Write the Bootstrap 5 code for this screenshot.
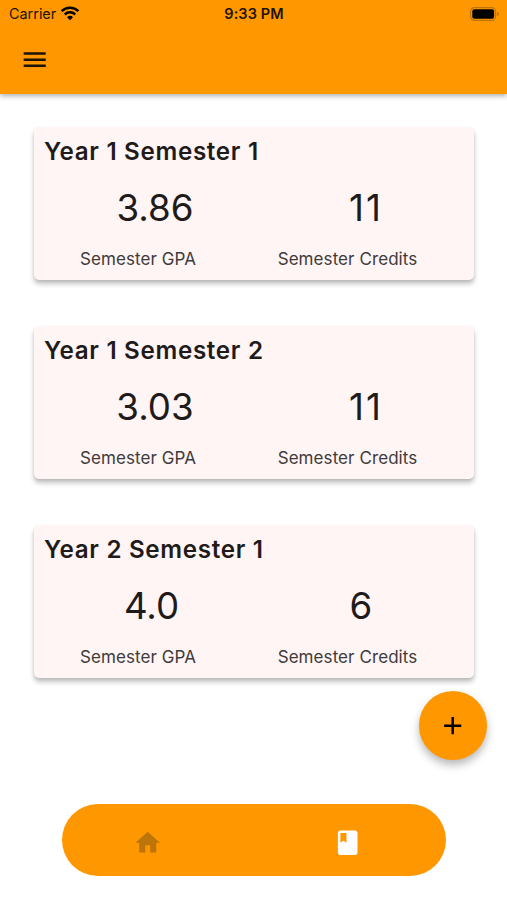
<!DOCTYPE html>
<html lang="en">
<head>
<meta charset="utf-8">
<meta name="viewport" content="width=device-width, initial-scale=1">
<title>Semesters</title>
<link href="https://cdn.jsdelivr.net/npm/bootstrap@5.3.0/dist/css/bootstrap.min.css" rel="stylesheet">
<style>
  body { font-family: Inter, "Liberation Sans", sans-serif; color: #1f1b1b; background: #fff; }
  .screen { height: 900px; overflow: hidden; }
  .orange { background: #ff9800; color: #1d1300; }
  .app-header { height: 94px; box-shadow: 0 2px 5px rgba(0,0,0,.32); }
  .status { height: 27px; padding: 0 7px 0 9px; }
  .status > * { flex: 1 1 0; }
  .carrier { font-size: 14.4px; }
  .clock { font-size: 14.5px; font-weight: 600; letter-spacing: .1px; padding-right: 1px; }
  .menu-btn { margin: 18px 0 0 20px; color: #1d1300; }
  .icon { width: 29.4px; height: 29.4px; fill: currentColor; display: block; }
  .semesters { padding: 32.500px 33px 0 34px; gap: 46px; }
  .semester { height: 153px; background: #fff5f4; border-radius: 5px; box-shadow: 0 4px 5px rgba(0,0,0,.24), 0 1px 3px rgba(0,0,0,.08); }
  .semester h2 { font-size: 24.2px; font-weight: 600; line-height: 30px; margin: 10px 0 0 10px; letter-spacing: .68px; }
  .figures { padding-left: 4px; margin-top: 17px; }
  .stat-gpa { width: 200px; }
  .stat-credits { width: 219px; }
  .value { font-size: 36.7px; line-height: 48px; font-weight: 400; padding-left: 34px; }
  .stat-credits .value { padding-left: 35px; letter-spacing: 2px; text-indent: 2px; }
  .value.single, .stat-credits .value.single { padding-left: 27px; letter-spacing: 0; text-indent: 0; }
  .caption { font-size: 17px; line-height: 22px; margin-top: 16px; letter-spacing: .08px; color: #403b3b; }
  .fab { width: 68.5px; height: 68.5px; left: 418.8px; top: 691px; color: #000; box-shadow: 0 5px 9px rgba(0,0,0,.28); }
  .tabs { width: 384px; height: 72px; margin: 126px 0 0 62px; border-radius: 36px; }
  .tab-home { color: #bd7408; margin-left: 71px; margin-top: 6px; }
  .tab-class { color: #fff; margin-right: 84px; margin-top: 6px; }
</style>
<script src="https://cdn.jsdelivr.net/npm/bootstrap@5.3.0/dist/js/bootstrap.bundle.min.js"></script>
</head>
<body>
<div class="screen position-relative">
  <header class="app-header orange">
    <div class="status d-flex align-items-center">
      <div class="carrier d-flex align-items-center">Carrier
        <svg class="ms-1" width="20" height="15" viewBox="0 0 20 15" fill="none" stroke="#000" stroke-width="2.5"><path d="M1.6 5.1a12 12 0 0 1 16.8 0M4.8 8.5a7.4 7.4 0 0 1 10.4 0"/><path d="M10 14.3 7 11.2a4.3 4.3 0 0 1 6 0z" fill="#000" stroke="none"/></svg>
      </div>
      <div class="clock text-center">9:33 PM</div>
      <div class="d-flex justify-content-end">
        <svg width="30" height="14" viewBox="0 0 30 14"><rect x=".6" y=".6" width="25" height="12.8" rx="3.8" fill="none" stroke="#bd7408" stroke-width="1.2"/><rect x="2.3" y="2.3" width="21.8" height="9.4" rx="2" fill="#000"/><path d="M27.2 4.7v4.6q2-.8 2-2.3t-2-2.3z" fill="#bd7408"/></svg>
      </div>
    </div>
    <button class="menu-btn btn border-0 p-0" aria-label="Menu"><svg class="icon" viewBox="0 0 24 24"><path d="M3 18h18v-2H3v2zm0-5h18v-2H3v2zm0-7v2h18V6H3z"/></svg></button>
  </header>

  <main class="semesters d-flex flex-column">
    <section class="semester d-flex flex-column">
      <h2>Year 1 Semester 1</h2>
      <div class="figures d-flex text-center">
        <div class="stat-gpa"><div class="value">3.86</div><div class="caption">Semester GPA</div></div>
        <div class="stat-credits"><div class="value">11</div><div class="caption">Semester Credits</div></div>
      </div>
    </section>
    <section class="semester d-flex flex-column">
      <h2>Year 1 Semester 2</h2>
      <div class="figures d-flex text-center">
        <div class="stat-gpa"><div class="value">3.03</div><div class="caption">Semester GPA</div></div>
        <div class="stat-credits"><div class="value">11</div><div class="caption">Semester Credits</div></div>
      </div>
    </section>
    <section class="semester d-flex flex-column">
      <h2>Year 2 Semester 1</h2>
      <div class="figures d-flex text-center">
        <div class="stat-gpa"><div class="value single">4.0</div><div class="caption">Semester GPA</div></div>
        <div class="stat-credits"><div class="value single">6</div><div class="caption">Semester Credits</div></div>
      </div>
    </section>
  </main>

  <button class="fab orange btn border-0 rounded-circle p-0 position-absolute d-flex align-items-center justify-content-center" aria-label="Add"><svg class="icon" viewBox="0 0 24 24"><path d="M19 13h-6v6h-2v-6H5v-2h6V5h2v6h6v2z"/></svg></button>

  <nav class="tabs orange d-flex align-items-center justify-content-between">
    <a class="tab-home" href="#" aria-label="Home"><svg class="icon" viewBox="0 0 24 24"><path d="M10 20v-6h4v6h5v-8h3L12 3 2 12h3v8z"/></svg></a>
    <a class="tab-class" href="#" aria-label="Semesters"><svg class="icon" viewBox="0 0 24 24"><path d="M18 2H6c-1.1 0-2 .9-2 2v16c0 1.1.9 2 2 2h12c1.1 0 2-.9 2-2V4c0-1.1-.9-2-2-2zM6 4h5v8l-2.500-1.500L6 12V4z"/></svg></a>
  </nav>
</div>
</body>
</html>
